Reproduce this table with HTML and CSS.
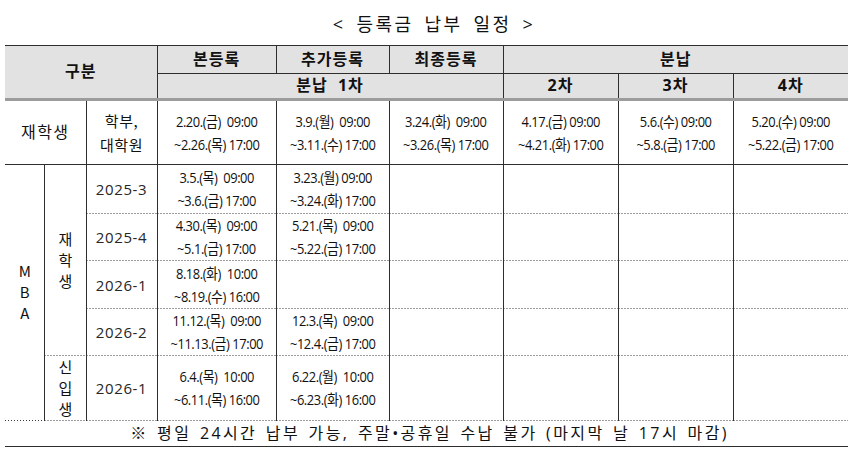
FILE: index.html
```html
<!DOCTYPE html>
<html lang="ko">
<head>
<meta charset="utf-8">
<title>등록금 납부 일정</title>
<link rel="stylesheet" href="styles.css">
</head>
<body>
<div class="title">&lt; 등록금 납부 일정 &gt;</div>
<table class="sched">
  <colgroup>
    <col class="c1"><col class="c2"><col class="c3"><col class="c4"><col class="c5"><col class="c6"><col class="c7"><col class="c8"><col class="c9">
  </colgroup>
  <thead>
    <tr class="h1">
      <th class="l0 hb" colspan="3" rowspan="2">구분</th>
      <th>본등록</th>
      <th>추가등록</th>
      <th>최종등록</th>
      <th class="r0" colspan="3">분납</th>
    </tr>
    <tr class="h2">
      <th class="hb" colspan="3">분납&nbsp; 1차</th>
      <th class="hb">2차</th>
      <th class="hb">3차</th>
      <th class="hb r0">4차</th>
    </tr>
  </thead>
  <tbody>
    <tr class="r-main">
      <td class="l0 lbl big sb" colspan="2">재학생</td>
      <td class="lbl ko sb">학부,<br>대학원</td>
      <td class="sb"><span class="d">2.20.(금)&nbsp; 09:00<br>~2.26.(목) 17:00</span></td>
      <td class="sb"><span class="d">3.9.(월)&nbsp; 09:00<br>~3.11.(수) 17:00</span></td>
      <td class="sb"><span class="d">3.24.(화)&nbsp; 09:00<br>~3.26.(목) 17:00</span></td>
      <td class="sb"><span class="d">4.17.(금) 09:00<br>~4.21.(화) 17:00</span></td>
      <td class="sb"><span class="d">5.6.(수) 09:00<br>~5.8.(금) 17:00</span></td>
      <td class="sb r0"><span class="d">5.20.(수) 09:00<br>~5.22.(금) 17:00</span></td>
    </tr>
    <tr class="r1">
      <td class="l0 vt db" rowspan="5"><span class="vtx">MBA</span></td>
      <td class="vt db" rowspan="4"><span class="vtx">재학생</span></td>
      <td class="lbl num db">2025-3</td>
      <td class="db"><span class="d">3.5.(목)&nbsp; 09:00<br>~3.6.(금) 17:00</span></td>
      <td class="db"><span class="d">3.23.(월) 09:00<br>~3.24.(화) 17:00</span></td>
      <td class="db"></td><td class="db"></td><td class="db"></td><td class="db r0"></td>
    </tr>
    <tr class="r2">
      <td class="lbl num db">2025-4</td>
      <td class="db"><span class="d">4.30.(목)&nbsp; 09:00<br>~5.1.(금) 17:00</span></td>
      <td class="db"><span class="d">5.21.(목)&nbsp; 09:00<br>~5.22.(금) 17:00</span></td>
      <td class="db"></td><td class="db"></td><td class="db"></td><td class="db r0"></td>
    </tr>
    <tr class="r3">
      <td class="lbl num db">2026-1</td>
      <td class="db"><span class="d">8.18.(화)&nbsp; 10:00<br>~8.19.(수) 16:00</span></td>
      <td class="db"></td>
      <td class="db"></td><td class="db"></td><td class="db"></td><td class="db r0"></td>
    </tr>
    <tr class="r4">
      <td class="lbl num db">2026-2</td>
      <td class="db"><span class="d">11.12.(목)&nbsp; 09:00<br>~11.13.(금) 17:00</span></td>
      <td class="db"><span class="d">12.3.(목)&nbsp; 09:00<br>~12.4.(금) 17:00</span></td>
      <td class="db"></td><td class="db"></td><td class="db"></td><td class="db r0"></td>
    </tr>
    <tr class="r5">
      <td class="vt db"><span class="vtx">신입생</span></td>
      <td class="lbl num db">2026-1</td>
      <td class="db"><span class="d">6.4.(목)&nbsp; 10:00<br>~6.11.(목) 16:00</span></td>
      <td class="db"><span class="d">6.22.(월)&nbsp; 10:00<br>~6.23.(화) 16:00</span></td>
      <td class="db"></td><td class="db"></td><td class="db"></td><td class="db r0"></td>
    </tr>
    <tr class="r-note">
      <td class="note l0 r0" colspan="9">※ 평일 24시간 납부 가능, 주말•공휴일 수납 불가 (마지막 날 17시 마감)</td>
    </tr>
  </tbody>
</table>
</body>
</html>
```

FILE: styles.css
```css
html, body {
  margin: 0;
  padding: 0;
  background: #ffffff;
}

body {
  font-family: "Open Sans", "Noto Sans CJK KR", sans-serif;
  color: #111111;
}

.title {
  height: 45px;
  display: flex;
  align-items: center;
  justify-content: center;
  font-size: 18px;
  letter-spacing: 2.4px;
  word-spacing: 4px;
  padding-left: 8px;
  box-sizing: border-box;
}

.sched {
  margin-left: 5px;
  width: 843px;
  border-collapse: collapse;
  table-layout: fixed;
}

.c1 { width: 39px; }
.c2 { width: 42px; }
.c3 { width: 71px; }
.c4 { width: 119px; }
.c5 { width: 113px; }
.c6 { width: 114px; }
.c7 { width: 115px; }
.c8 { width: 115px; }
.c9 { width: 115px; }

.sched th,
.sched td {
  padding: 0;
  text-align: center;
  vertical-align: middle;
  border-left: 1px solid #2e2e2e;
  border-right: 1px solid #2e2e2e;
  line-height: 1.2;
  font-weight: 400;
}

.sched th {
  background: #e2e2e2;
  font-weight: 700;
  font-size: 16px;
  letter-spacing: 1px;
  border-top: 1px solid #2e2e2e;
  border-bottom: 1px solid #2e2e2e;
}

.sched .l0 { border-left: none; }
.sched .r0 { border-right: none; }

.sched th.hb {
  border-bottom: 3px solid #9c9c9c;
}

.h1 { height: 28px; }
.h2 { height: 26px; }
.r-main { height: 65px; }
.r1 { height: 49px; }
.r2 { height: 47px; }
.r3 { height: 48px; }
.r4 { height: 47px; }
.r5 { height: 65px; }
.r-note { height: 26px; }

.sched td.sb { border-bottom: 1px solid #2e2e2e; }

.sched td.db {
  border-bottom: none;
  background-image: linear-gradient(to right, #3a3a3a 0, #3a3a3a 1.5px, transparent 1.5px, transparent 3px);
  background-size: 3px 1px;
  background-repeat: repeat-x;
  background-position: left bottom;
}

.lbl {
  font-size: 15px;
  letter-spacing: 0.5px;
  line-height: 23px;
}

.lbl.num {
  font-size: 15px;
  letter-spacing: 0.6px;
  color: #262626;
}

.lbl.ko {
  font-family: "Noto Sans CJK KR", sans-serif;
  font-size: 15px;
  line-height: 24px;
  letter-spacing: 0.5px;
}

.lbl.big {
  font-size: 16px;
  letter-spacing: 1.5px;
}

.vt {
  font-family: "Noto Sans CJK KR", sans-serif;
  font-size: 15px;
  line-height: 1;
}

.vtx {
  display: inline-block;
  writing-mode: vertical-rl;
  text-orientation: upright;
  letter-spacing: 6px;
  margin-bottom: -6px;
  line-height: 1.2;
  vertical-align: middle;
}

.d {
  display: inline-block;
  font-size: 15px;
  line-height: 23px;
  letter-spacing: -0.5px;
  transform: scaleX(0.86);
  white-space: nowrap;
}

.sched td.note {
  font-size: 16px;
  letter-spacing: 2.4px;
  word-spacing: 2px;
  border-bottom: 1px solid #2e2e2e;
  padding-left: 6px;
}
```
